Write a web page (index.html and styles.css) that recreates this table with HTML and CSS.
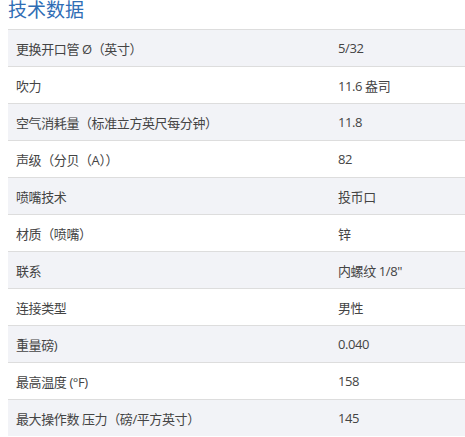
FILE: index.html
```html
<!DOCTYPE html>
<html lang="zh">
<head>
<meta charset="utf-8">
<link rel="stylesheet" href="styles.css">
</head>
<body>
<section class="specs">
  <h2 class="specs-title">技术数据</h2>
  <table class="specs-table">
    <tbody>
      <tr><td class="label">更换开口管 Ø（英寸）</td><td class="value">5/32</td></tr>
      <tr><td class="label">吹力</td><td class="value">11.6 盎司</td></tr>
      <tr><td class="label">空气消耗量（标准立方英尺每分钟）</td><td class="value">11.8</td></tr>
      <tr><td class="label">声级（分贝（A））</td><td class="value">82</td></tr>
      <tr><td class="label">喷嘴技术</td><td class="value">投币口</td></tr>
      <tr><td class="label">材质（喷嘴）</td><td class="value">锌</td></tr>
      <tr><td class="label">联系</td><td class="value">内螺纹 1/8"</td></tr>
      <tr><td class="label">连接类型</td><td class="value">男性</td></tr>
      <tr><td class="label">重量磅)</td><td class="value">0.040</td></tr>
      <tr><td class="label">最高温度 (°F)</td><td class="value">158</td></tr>
      <tr><td class="label">最大操作数 压力（磅/平方英寸）</td><td class="value">145</td></tr>
    </tbody>
  </table>
</section>
</body>
</html>
```
FILE: styles.css
```css
html, body {
  margin: 0;
  padding: 0;
  background: #ffffff;
  overflow: hidden;
}
body {
  font-family: "Open Sans", "Noto Sans CJK SC", sans-serif;
  color: #444444;
}
.specs {
  padding-left: 8px;
}
.specs-title {
  margin: 0;
  font-size: 19px;
  font-weight: 400;
  line-height: 22px;
  color: #2f6db5;
  margin-top: -1px;
  margin-bottom: 8px;
}
.specs-table {
  width: 100%;
  border-collapse: collapse;
  font-size: 13px;
  letter-spacing: -0.4px;
}
.specs-table tr {
  border-top: 1px solid #dddddd;
}
.specs-table tr:nth-child(odd) {
  background: #f2f3f7;
}
.specs-table td {
  height: 36px;
  padding: 0 8px;
  vertical-align: middle;
}
.specs-table .label {
  width: 306px;
}
```
